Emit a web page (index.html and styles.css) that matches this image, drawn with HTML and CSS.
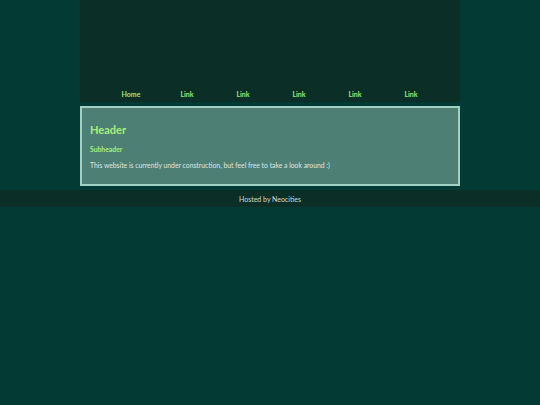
FILE: index.html
```html
<!DOCTYPE html>
<html>
<head>
<meta charset="utf-8">
<link rel="stylesheet" href="styles.css">
</head>
<body>
<div class="container">
  <header class="top">
    <nav class="nav">
      <a href="#">Home</a>
      <a href="#">Link</a>
      <a href="#">Link</a>
      <a href="#">Link</a>
      <a href="#">Link</a>
      <a href="#">Link</a>
    </nav>
  </header>
  <main class="box">
    <h1>Header</h1>
    <h2>Subheader</h2>
    <p>This website is currently under construction, but feel free to take a look around :)</p>
  </main>
</div>
<footer class="foot">Hosted by Neocities</footer>
</body>
</html>
```
FILE: styles.css
```css
html, body {
  margin: 0;
  padding: 0;
}
body {
  background: #043a34;
  font-family: Lato, "Open Sans", sans-serif;
  min-height: 405px;
}
.container {
  width: 380px;
  margin: 0 auto;
}
.top {
  background: #0b2f26;
  height: 102px;
  display: flex;
  align-items: flex-end;
}
.nav {
  display: flex;
  width: 100%;
  padding: 0 21px 3px 23px;
  box-sizing: border-box;
}
.nav a {
  flex: 1;
  text-align: center;
  color: #a3e470;
  font-weight: bold;
  font-size: 7px;
  text-decoration: none;
  line-height: 10px;
}
.box {
  display: block;
  margin-top: 4px;
  background: #4e7f74;
  border: 2px solid #9fd2c2;
  height: 76px;
  padding: 0 8px;
}
.box h1 {
  margin: 14px 0 0;
  font-size: 11px;
  line-height: 16px;
  color: #a8ee7c;
  font-weight: bold;
}
.box h2 {
  margin: 6px 0 0;
  font-size: 6.8px;
  line-height: 10px;
  color: #a8ee7c;
  font-weight: bold;
}
.box p {
  margin: 6px 0 0;
  font-size: 6.8px;
  line-height: 10px;
  color: #dce8e4;
}
.foot {
  margin-top: 4px;
  background: #0b2f26;
  height: 17px;
  line-height: 18px;
  text-align: center;
  color: #d0dad6;
  font-size: 7px;
}
```
